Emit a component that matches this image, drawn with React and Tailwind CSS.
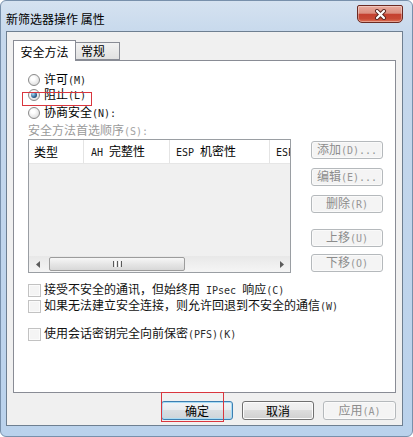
import React from "react";

// latin bits look monospaced in the original (SimSun half-width), so render them mono
function En({ children }) {
  return (
    <span className="font-['DejaVu_Sans_Mono',monospace] text-[10px] text-current opacity-90">
      {children}
    </span>
  );
}

function Radio({ checked, children, className }) {
  return (
    <div className={`flex items-center ${className}`}>
      <div className="w-[12px] h-[12px] rounded-full border border-[#8a8a8a] bg-[radial-gradient(circle_at_40%_35%,#ffffff_20%,#d2d2d2_100%)] flex items-center justify-center">
        {checked && (
          <div className="w-[6px] h-[6px] rounded-full bg-[radial-gradient(circle_at_35%_35%,#a6dcf8,#2b5d8c_60%,#15324f)]" />
        )}
      </div>
      <span className="ml-[4px] leading-[14px]">{children}</span>
    </div>
  );
}

function Check({ children, className }) {
  return (
    <div className={`flex items-center h-[14px] ${className}`}>
      <div className="w-[13px] h-[13px] border border-[#c2c2c2] bg-[#f4f4f4] shadow-[inset_0_0_0_1px_#fbfbfb]" />
      <span className="ml-[3px] leading-[14px] text-[#111]">{children}</span>
    </div>
  );
}

// disabled grey button used on the right of the list and for "应用"
function DimButton({ children, className }) {
  return (
    <div className={`flex items-center justify-center border border-[#b5b9bc] rounded-[3px] bg-[#f4f4f4] text-[#8c8c8c] shadow-[inset_0_0_0_1px_#fafafa] ${className}`}>
      <span className="leading-[14px] whitespace-nowrap">{children}</span>
    </div>
  );
}

export default function App() {
  return (
    <div className="relative w-[413px] h-[437px] overflow-hidden bg-white font-['Noto_Sans_CJK_SC',sans-serif] text-[12px] text-black">
      <div className="w-full h-full flex flex-col pl-[5px] pr-[9px] pb-[10px] rounded-[6px] border border-[#7890ab] bg-[linear-gradient(to_bottom,#d5e2f0_0%,#c6d8ec_8%,#bad2ec_100%)]">
        {/* title bar */}
        <div className="h-[30px] shrink-0 flex justify-between items-start">
          <div className="mt-[11px] leading-[14px]">新筛选器操作 属性</div>
          <div className="mt-[4px] w-[46px] h-[18px] rounded-t-[2px] rounded-b-[5px] border border-[#6b2a22] bg-[linear-gradient(to_bottom,#e9aa9c_0%,#db8f80_45%,#c4402f_52%,#c84934_80%,#de7458_100%)] shadow-[inset_0_0_0_1px_rgba(255,255,255,0.35)] flex items-center justify-center">
            <svg width="13" height="11" viewBox="0 0 13 11">
              <path d="M3 2 L10 9 M10 2 L3 9" stroke="#5a2620" strokeWidth="4" strokeLinecap="round" />
              <path d="M3 2 L10 9 M10 2 L3 9" stroke="#ffffff" strokeWidth="2.2" strokeLinecap="round" />
            </svg>
          </div>
        </div>

        {/* client area */}
        <div className="flex-1 flex flex-col border border-[#6e7f91] bg-[#f0f0f0] pt-[8px] pl-[6px] pr-[6px]">
          {/* tabs */}
          <div className="h-[20px] flex items-end">
            <div className="relative z-10 w-[63px] h-[21px] -mb-[1px] bg-white border border-b-0 border-[#898c95] flex items-center justify-center leading-[14px] pt-[2px]">
              安全方法
            </div>
            <div className="w-[44px] h-[18px] border border-l-0 border-[#898c95] bg-[linear-gradient(to_bottom,#f2f2f2,#e1e1e1)] flex items-center pl-[5px] leading-[14px]">
              常规
            </div>
          </div>

          {/* tab panel */}
          <div className="h-[333px] border border-[#898c95] bg-white pl-[14px] pt-[11px] flex flex-col">
            <Radio className="h-[15px]">许可<En>(M)</En></Radio>
            <Radio checked className="h-[14px] mt-[1px]">阻止<En>(L)</En></Radio>
            <Radio className="h-[15px] mt-[3px]">协商安全<En>(N):</En></Radio>
            <div className="h-[14px] mt-[3px] leading-[14px] text-[#9a9a9a]">
              安全方法首选顺序<En>(S):</En>
            </div>

            <div className="mt-[2px] flex items-start">
              {/* list */}
              <div className="w-[263px] h-[134px] border border-[#9a9ea3] flex flex-col">
                <div className="h-[24px] flex bg-white border-b border-[#e6e6e6] leading-[14px]">
                  <div className="w-[55px] border-r border-[#e4e4e4] flex items-center pl-[5px]">类型</div>
                  <div className="w-[86px] border-r border-[#e4e4e4] flex items-center pl-[7px]">
                    <span><En>AH </En>完整性</span>
                  </div>
                  <div className="w-[100px] border-r border-[#e4e4e4] flex items-center pl-[6px]">
                    <span><En>ESP </En>机密性</span>
                  </div>
                  <div className="flex-1 overflow-hidden flex items-center pl-[6px] whitespace-nowrap">
                    <span><En>ESP </En>完整性</span>
                  </div>
                </div>
                <div className="flex-1 bg-[#f0f0f0]" />
                {/* horizontal scrollbar */}
                <div className="h-[16px] flex items-center bg-[linear-gradient(to_bottom,#e8e8e8,#f5f5f5)]">
                  <div className="w-[17px] flex justify-center">
                    <svg width="4" height="7" viewBox="0 0 4 7">
                      <path d="M4 0 L0 3.5 L4 7Z" fill="#5c5c5c" />
                    </svg>
                  </div>
                  <div className="ml-[3px] w-[136px] h-[14px] rounded-[2px] border border-[#9c9c9c] bg-[linear-gradient(to_bottom,#f7f7f7,#e6e6e6_50%,#d8d8d8)] flex items-center justify-center gap-[1px]">
                    <div className="w-[1px] h-[6px] bg-[#5a5a5a]" />
                    <div className="w-[1px] h-[6px] bg-white" />
                    <div className="w-[1px] h-[6px] bg-[#5a5a5a]" />
                    <div className="w-[1px] h-[6px] bg-white" />
                    <div className="w-[1px] h-[6px] bg-[#5a5a5a]" />
                  </div>
                  <div className="flex-1" />
                  <div className="w-[17px] flex justify-center">
                    <svg width="4" height="7" viewBox="0 0 4 7">
                      <path d="M0 0 L4 3.5 L0 7Z" fill="#5c5c5c" />
                    </svg>
                  </div>
                </div>
              </div>

              {/* side buttons */}
              <div className="ml-[20px] w-[72px] flex flex-col">
                <DimButton className="h-[18px] mt-[2px]">添加<En>(D)...</En></DimButton>
                <DimButton className="h-[18px] mt-[9px]">编辑<En>(E)...</En></DimButton>
                <DimButton className="h-[18px] mt-[9px]">删除<En>(R)</En></DimButton>
                <DimButton className="h-[18px] mt-[16px]">上移<En>(U)</En></DimButton>
                <DimButton className="h-[18px] mt-[7px]">下移<En>(O)</En></DimButton>
              </div>
            </div>

            <Check className="mt-[10px]">
              接受不安全的通讯，但始终用<En> IPsec </En>响应<En>(C)</En>
            </Check>
            <Check className="mt-[2px]">
              如果无法建立安全连接，则允许回退到不安全的通信<En>(W)</En>
            </Check>
            <Check className="mt-[14px]">
              使用会话密钥完全向前保密<En>(PFS)(K)</En>
            </Check>
          </div>

          {/* dialog buttons */}
          <div className="mt-[8px] flex justify-end gap-[9px]">
            <div className="w-[72px] h-[19px] rounded-[3px] border border-[#3c7fb1] bg-[linear-gradient(to_bottom,#f1f4f7_0%,#e8ecef_50%,#d9dee2_50%,#cdd4d9_100%)] shadow-[inset_0_0_0_1px_#a9dcf5] flex items-center justify-center leading-[14px]">
              确定
            </div>
            <div className="w-[72px] h-[19px] rounded-[3px] border border-[#707070] bg-[linear-gradient(to_bottom,#f2f2f2_0%,#ebebeb_50%,#dddddd_50%,#cfcfcf_100%)] shadow-[inset_0_0_0_1px_#fcfcfc] flex items-center justify-center leading-[14px]">
              取消
            </div>
            <DimButton className="w-[73px] h-[19px]">应用<En>(A)</En></DimButton>
          </div>
        </div>
      </div>

      {/* red annotation boxes */}
      <div className="absolute left-[22px] top-[92px] w-[70px] h-[14px] border border-[#d9363e]" />
      <div className="absolute left-[161px] top-[392px] w-[63px] h-[30px] border border-[#d9363e]" />
    </div>
  );
}
